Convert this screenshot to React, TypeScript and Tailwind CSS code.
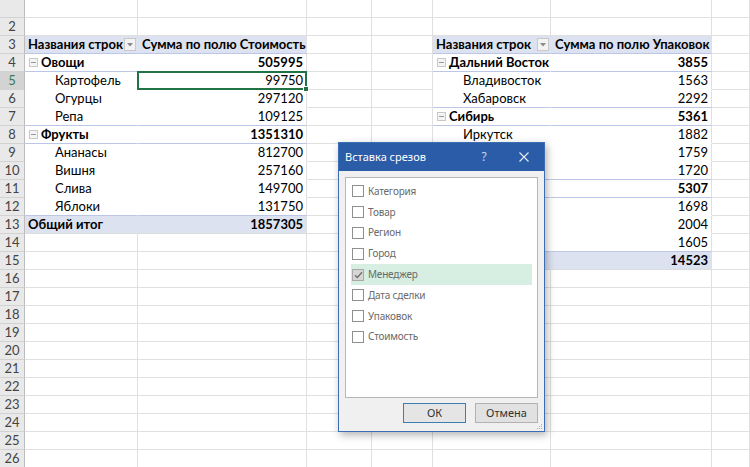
import clsx from 'clsx';

type Kind = 'head' | 'cat' | 'item' | 'total';

interface PivotRow {
  kind: Kind;
  label: string;
  value: string;
}

const leftPivot: PivotRow[] = [
  { kind: 'head', label: 'Названия строк', value: 'Сумма по полю Стоимость' },
  { kind: 'cat', label: 'Овощи', value: '505995' },
  { kind: 'item', label: 'Картофель', value: '99750' },
  { kind: 'item', label: 'Огурцы', value: '297120' },
  { kind: 'item', label: 'Репа', value: '109125' },
  { kind: 'cat', label: 'Фрукты', value: '1351310' },
  { kind: 'item', label: 'Ананасы', value: '812700' },
  { kind: 'item', label: 'Вишня', value: '257160' },
  { kind: 'item', label: 'Слива', value: '149700' },
  { kind: 'item', label: 'Яблоки', value: '131750' },
  { kind: 'total', label: 'Общий итог', value: '1857305' },
];

// labels under the dialog are not visible, so they are left empty
const rightPivot: PivotRow[] = [
  { kind: 'head', label: 'Названия строк', value: 'Сумма по полю Упаковок' },
  { kind: 'cat', label: 'Дальний Восток', value: '3855' },
  { kind: 'item', label: 'Владивосток', value: '1563' },
  { kind: 'item', label: 'Хабаровск', value: '2292' },
  { kind: 'cat', label: 'Сибирь', value: '5361' },
  { kind: 'item', label: 'Иркутск', value: '1882' },
  { kind: 'item', label: '', value: '1759' },
  { kind: 'item', label: '', value: '1720' },
  { kind: 'cat', label: '', value: '5307' },
  { kind: 'item', label: '', value: '1698' },
  { kind: 'item', label: '', value: '2004' },
  { kind: 'item', label: '', value: '1605' },
  { kind: 'total', label: '', value: '14523' },
];

const fields = ['Категория', 'Товар', 'Регион', 'Город', 'Менеджер', 'Дата сделки', 'Упаковок', 'Стоимость'];

const ROWS = Array.from({ length: 26 }, (_, i) => i + 1);

function Collapse() {
  return (
    <span className="w-[9px] h-[9px] border border-[#c8c8c8] bg-[#f4f4f4] flex items-center justify-center mr-[3px] shrink-0">
      <span className="w-[5px] h-px bg-[#9a9a9a]" />
    </span>
  );
}

function Dropdown() {
  return (
    <span className="ml-auto w-[12px] h-[13px] border border-[#c9c9c9] bg-[#f3f3f3] flex items-center justify-center shrink-0">
      <svg width="6" height="4" viewBox="0 0 6 4">
        <path d="M0 0h6L3 3.5z" fill="#8a8a8a" />
      </svg>
    </span>
  );
}

function hasLine(row: PivotRow, next?: PivotRow) {
  return row.kind === 'head' || row.kind === 'cat' || next?.kind === 'cat' || next?.kind === 'total';
}

function LabelCell({ row, next }: { row: PivotRow; next?: PivotRow }) {
  const band = row.kind === 'head' || row.kind === 'total';
  return (
    <div
      className={clsx(
        'h-[18px] flex items-center border-b border-r whitespace-nowrap overflow-hidden',
        band ? 'bg-[#dde2f1] border-r-[#dde2f1]' : 'bg-white border-r-white',
        row.kind === 'total' ? 'border-b-[#dcdcdc]' : hasLine(row, next) ? 'border-b-[#bcc6e6]' : 'border-b-white',
        row.kind === 'item' ? 'pl-[30px]' : row.kind === 'cat' ? 'pl-[4px]' : 'pl-[3px] pr-px',
        row.kind !== 'item' && 'font-bold'
      )}
    >
      {row.kind === 'cat' && row.label && <Collapse />}
      {row.label && <span>{row.label}</span>}
      {row.kind === 'head' && <Dropdown />}
    </div>
  );
}

function ValueCell({ row, next, selected }: { row: PivotRow; next?: PivotRow; selected?: boolean }) {
  const band = row.kind === 'head' || row.kind === 'total';
  return (
    <div
      className={clsx(
        'h-[18px] flex items-center justify-end pr-[3px] border-b border-r border-r-[#e0e0e0] whitespace-nowrap',
        band ? 'bg-[#dde2f1]' : 'bg-white',
        row.kind === 'total' ? 'border-b-[#dcdcdc]' : hasLine(row, next) ? 'border-b-[#bcc6e6]' : 'border-b-white',
        row.kind !== 'item' && 'font-bold',
        row.kind === 'head' && 'justify-start pl-[4px] overflow-hidden',
        selected && 'relative z-10'
      )}
    >
      <span>{row.value}</span>
      {selected && (
        <>
          <div className="absolute -left-px -top-px -right-px -bottom-px border-2 border-[#217346] pointer-events-none" />
          <div className="absolute -right-[3px] -bottom-[3px] w-[6px] h-[6px] bg-[#217346] border border-white" />
        </>
      )}
    </div>
  );
}

function Blank() {
  return <div className="h-[18px] border-b border-r border-[#e0e0e0] bg-white" />;
}

function SheetRow({ r }: { r: number }) {
  const li = r - 3;
  const left = li >= 0 && li < leftPivot.length ? leftPivot[li] : undefined;
  const right = li >= 0 && li < rightPivot.length ? rightPivot[li] : undefined;
  const selectedRow = r === 5;
  return (
    <div className="grid grid-cols-[25px_113px_169px_65px_61px_118px_161px_38px]">
      <div
        className={clsx(
          'h-[18px] flex items-center justify-center border-b border-b-[#d2d2d2] border-r border-r-[#bdbdbd] text-[13px]',
          selectedRow ? 'bg-[#d3d3d3] text-[#3b7a57]' : 'bg-[#e9e9e9] text-[#444]'
        )}
      >
        {r === 1 ? '' : r}
      </div>
      {left ? <LabelCell row={left} next={leftPivot[li + 1]} /> : <Blank />}
      {left ? <ValueCell row={left} next={leftPivot[li + 1]} selected={selectedRow} /> : <Blank />}
      <Blank />
      <Blank />
      {right ? <LabelCell row={right} next={rightPivot[li + 1]} /> : <Blank />}
      {right ? <ValueCell row={right} next={rightPivot[li + 1]} /> : <Blank />}
      <Blank />
    </div>
  );
}

function Checkbox({ checked }: { checked?: boolean }) {
  return (
    <span
      className={clsx(
        'w-[12px] h-[12px] border flex items-center justify-center shrink-0',
        checked ? 'bg-[#d6d6d6] border-[#a8a8a8]' : 'bg-white border-[#8f8f8f]'
      )}
    >
      {checked && (
        <svg width="9" height="8" viewBox="0 0 9 8">
          <path d="M1 4.2l2.3 2.3L8 1.2" fill="none" stroke="#6d6d6d" strokeWidth="1.3" />
        </svg>
      )}
    </span>
  );
}

function SlicerDialog() {
  return (
    <div className="absolute left-[338px] top-[142px] w-[207px] h-[290px] border border-[#3d6eb3] bg-[#f0f0f0] shadow-[2px_3px_8px_rgba(0,0,0,0.3)] font-['Noto_Sans',sans-serif] flex flex-col">
      <div className="h-[28px] bg-[#2b5ca8] flex items-center pl-[6px] text-white text-[11px] shrink-0">
        <span>Вставка срезов</span>
        <span className="ml-auto w-[16px] text-center text-[#c9d6ea] text-[12px] leading-none">?</span>
        <span className="ml-[25px] mr-[13px] w-[14px] flex justify-center">
          <svg width="10" height="10" viewBox="0 0 10 10">
            <path d="M0.5 0.5l9 9M9.5 0.5l-9 9" stroke="#e6ecf6" strokeWidth="1.1" />
          </svg>
        </span>
      </div>
      <div className="mx-[6px] mt-[6px] h-[221px] bg-white border border-[#b6b6b6] pt-[3px] px-[5px]">
        {fields.map((f) => (
          <div
            key={f}
            className={clsx(
              'h-[20.8px] flex items-center gap-[4px] pl-px text-[10px] text-[#6a6a6a] tracking-[-0.2px]',
              f === 'Менеджер' && 'bg-[#d6efe2]'
            )}
          >
            <Checkbox checked={f === 'Менеджер'} />
            <span>{f}</span>
          </div>
        ))}
      </div>
      <div className="flex justify-end gap-[9px] px-[6px] mt-[5px]">
        <button className="w-[63px] h-[20px] border border-[#3c7fb1] bg-[#e5e5e5] text-[11px] text-[#333] flex items-center justify-center">
          ОК
        </button>
        <button className="w-[63px] h-[20px] border border-[#b2b2b2] bg-[#e1e1e1] text-[11px] text-[#333] flex items-center justify-center">
          Отмена
        </button>
      </div>
      <svg className="absolute right-[1px] bottom-[1px]" width="8" height="8" viewBox="0 0 8 8">
        <rect x="6" y="2" width="1" height="1" fill="#b0b0b0" />
        <rect x="4" y="4" width="1" height="1" fill="#b0b0b0" />
        <rect x="6" y="4" width="1" height="1" fill="#b0b0b0" />
        <rect x="2" y="6" width="1" height="1" fill="#b0b0b0" />
        <rect x="4" y="6" width="1" height="1" fill="#b0b0b0" />
        <rect x="6" y="6" width="1" height="1" fill="#b0b0b0" />
      </svg>
    </div>
  );
}

export default function App() {
  return (
    <div className="relative w-[750px] h-[467px] overflow-hidden bg-white font-['Lato',sans-serif] text-[13px] text-black">
      {ROWS.map((r) => (
        <SheetRow key={r} r={r} />
      ))}
      <SlicerDialog />
    </div>
  );
}
